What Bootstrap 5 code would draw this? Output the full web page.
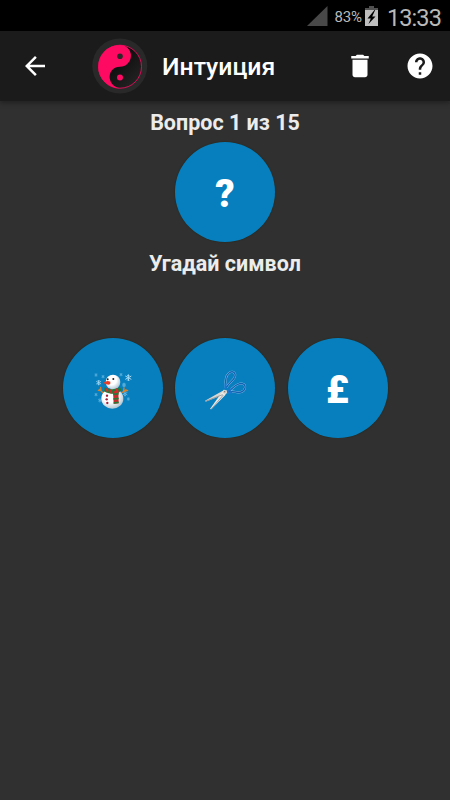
<!DOCTYPE html>
<html lang="ru">
<head>
<meta charset="utf-8">
<meta name="viewport" content="width=device-width, initial-scale=1">
<title>Интуиция</title>
<link href="https://cdn.jsdelivr.net/npm/bootstrap@5.3.0/dist/css/bootstrap.min.css" rel="stylesheet">
<style>
body{background:#303030;color:#ececec;font-family:Roboto,"Liberation Sans",sans-serif;overflow:hidden}
svg{display:block;flex:none}
.status{height:31px;background:#000;color:#b9b9b9;padding:0 9px 0 0}
.pct{font-size:15px;letter-spacing:-.15px;line-height:30px;margin-left:7px;margin-right:3px;padding-top:2px}
.clock{font-size:23.5px;line-height:30px;margin-left:9px;letter-spacing:-.9px;padding-top:4px}
.appbar{height:70px;background:#1b1b1b;box-shadow:0 2px 5px rgba(0,0,0,.35);padding:0 15px 0 20px}
.emblem{margin-left:42px}
.title{font-size:24.800px;font-weight:500;color:#fff;line-height:30px;margin-left:14px;padding-top:2px}
.help{margin-left:30px}
.caption{font-size:21.5px;font-weight:700;line-height:26px}
.quiz{padding-top:9px}
.disc{width:100px;height:100px;background:#077fbe;box-shadow:0 0 1px .6px #292b20;color:#fff;font-size:38px;font-weight:900;line-height:1;padding-top:4px}
.caption+.disc{margin-top:6px}
.disc+.caption{margin-top:9px}
.choices{gap:12.5px;margin-top:61px}
.scissors{margin-left:4px}
</style>
</head>
<body>
<div class="status d-flex justify-content-end align-items-center">
  <svg width="21" height="20" viewBox="0 0 21 20"><path d="M20.500 0V20H0Z" fill="#484848"/></svg>
  <span class="pct">83%</span>
  <svg width="13" height="20" viewBox="0 0 13 20"><path d="M4 0h5v2h4v2H0V2h4z" fill="#505050"/><path d="M0 4h13v16H0z" fill="#bebebe"/><path d="M9.500 4L2.500 12.500h3.300L3.500 18 10.500 10.500H7.200L10.200 4z" fill="#000"/></svg>
  <span class="clock">13:33</span>
</div>
<nav class="appbar d-flex align-items-center position-relative">
  <svg width="30" height="30" viewBox="0 0 24 24" fill="#fff"><path d="M20 11H7.830l5.590-5.590L12 4l-8 8 8 8 1.410-1.410L7.830 13H20v-2z"/></svg>
  <svg class="emblem" width="56" height="56" viewBox="92 38 56 56">
    <defs><linearGradient id="shade" x1="0" y1="0" x2="1" y2="1"><stop offset=".35" stop-color="#0c0c0c"/><stop offset="1" stop-color="#282828"/></linearGradient></defs>
    <circle cx="119.800" cy="66" r="27.500" fill="#292929"/>
    <circle cx="120" cy="66.700" r="21.500" fill="url(#shade)" stroke="#ff0a62" stroke-width=".8"/>
    <path d="M120 44.900a21.800 21.800 0 0 0 0 43.600C105.500 85 107 66.700 120 66.700a10.900 10.900 0 0 0 0-21.800z" fill="#ff0a62"/>
    <circle cx="120" cy="56.300" r="2.800" fill="#292929"/><circle cx="120" cy="77.400" r="3" fill="#ff0a62"/>
  </svg>
  <span class="title">Интуиция</span>
  <svg class="ms-auto" width="30" height="30" viewBox="0 0 24 24" fill="#fff"><path d="M6 19c0 1.100.9 2 2 2h8c1.100 0 2-.9 2-2V7H6v12zM19 4h-3.500l-1-1h-5l-1 1H5v2h14V4z"/></svg>
  <svg class="help" width="30" height="30" viewBox="0 0 24 24" fill="#fff"><path d="M12 2C6.480 2 2 6.480 2 12s4.480 10 10 10 10-4.480 10-10S17.520 2 12 2zm1 17h-2v-2h2v2zm2.070-7.750l-.9.920C13.450 12.900 13 13.500 13 15h-2v-.5c0-1.100.45-2.100 1.170-2.830l1.240-1.260c.37-.36.59-.86.59-1.410 0-1.100-.9-2-2-2s-2 .9-2 2H8c0-2.210 1.790-4 4-4s4 1.790 4 4c0 .88-.36 1.680-.93 2.250z"/></svg>
</nav>
<main class="quiz d-flex flex-column align-items-center">
  <div class="caption">Вопрос 1 из 15</div>
  <div class="disc rounded-circle d-flex align-items-center justify-content-center">?</div>
  <div class="caption">Угадай символ</div>
  <div class="choices d-flex">
    <div class="disc rounded-circle d-flex align-items-center justify-content-center">
      <svg width="64" height="60" viewBox="0 0 192 180">
        <defs>
          <radialGradient id="snow" cx=".4" cy=".35" r=".7"><stop offset=".5" stop-color="#fff"/><stop offset="1" stop-color="#a9bfcd"/></radialGradient>
          <g id="flake" stroke="#a8dcf6" stroke-width="3" fill="none"><path d="M0-10V10M-9-5L9 5M-9 5L9-5M-3-8L0-5 3-8M-3 8L0 5 3 8"/></g>
        </defs>
        <use href="#flake" x="142" y="53"/><use href="#flake" transform="translate(53 68) scale(.8)"/>
        <g opacity=".65"><use href="#flake" transform="translate(45 45) scale(.5)"/><use href="#flake" transform="translate(66 50) scale(.5)"/><use href="#flake" transform="translate(120 44) scale(.5)"/><use href="#flake" transform="translate(129 75) scale(.7)"/><use href="#flake" transform="translate(45 104) scale(.5)"/><use href="#flake" transform="translate(57 121) scale(.6)"/><use href="#flake" transform="translate(132 101) scale(.8)"/><use href="#flake" transform="translate(142 117) scale(.5)"/></g>
        <path d="M69 101L55 88M60 92l-1-10M60 92l-8-1M116 103l19-14M128 94l1-10M129 94l11-3" stroke="#d9822b" stroke-width="4" stroke-linecap="round"/>
        <ellipse cx="94" cy="116" rx="33" ry="30" fill="url(#snow)"/>
        <ellipse cx="96" cy="66" rx="22" ry="22" fill="url(#snow)"/>
        <path d="M71 82q22 12 46-1l4 10q-6 9-19 11-20 0-33-8z" fill="#267b38"/>
        <path d="M96 94l16-4 1 40-15 2z" fill="#c92c2c"/>
        <path d="M76 85l4 10M89 88l2 12M106 86l4 12" stroke="#d32d2d" stroke-width="6"/>
        <path d="M97 103l16-2M97 117l16-2M98 129l15-2" stroke="#267b38" stroke-width="5"/>
        <path d="M67 69q10-10 21-4 2 7-4 9-8 0-17-5z" fill="#ed3c24"/>
        <circle cx="80" cy="58" r="3" fill="#222"/><circle cx="97" cy="57" r="3" fill="#222"/>
        <g fill="#a51d36"><circle cx="78" cy="107" r="3.500"/><circle cx="77" cy="118" r="3.500"/><circle cx="79" cy="129" r="3.500"/></g>
      </svg>
    </div>
    <div class="disc rounded-circle d-flex align-items-center justify-content-center">
      <svg class="scissors" width="64" height="60" viewBox="0 0 192 180">
        <path d="M30 122L82 93l14-2 3 7-15 7-52 20z" fill="#d9d5cf"/>
        <path d="M45 147L86 89l9 5-4 11-42 43z" fill="#eeeae5"/>
        <path d="M31 124l52-20M48 148l37-43" stroke="#77818a" stroke-width="2"/>
        <defs><path id="loops" d="M92 84C91 72 88 50 102 39c13-9 22 1 17 13-6 12-17 15-25 31M97 96c14-6 18-18 31-23 16-6 24 0 22 11-3 13-18 15-28 12-12-3-15-1-25 1" fill="none"/></defs>
        <use href="#loops" stroke="#a3cdec" stroke-width="6"/>
        <use href="#loops" stroke="#1263b4" stroke-width="4.200"/>
        <path d="M92 70l-1 17M96 95l12-8M97 98h14" stroke="#1976cf" stroke-width="6"/>
        <circle cx="89" cy="95" r="6" fill="#d5d0c9"/><circle cx="89" cy="95" r="2" fill="#77716d"/>
      </svg>
    </div>
    <div class="disc rounded-circle d-flex align-items-center justify-content-center">£</div>
  </div>
</main>
<script src="https://cdn.jsdelivr.net/npm/bootstrap@5.3.0/dist/js/bootstrap.bundle.min.js"></script>
</body>
</html>
